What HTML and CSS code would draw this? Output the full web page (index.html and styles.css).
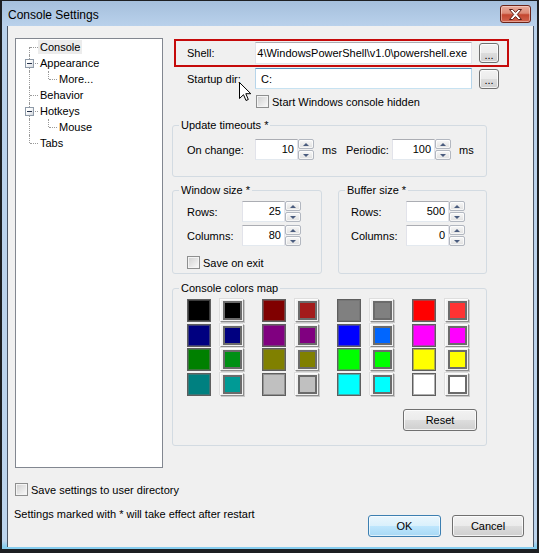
FILE: index.html
```html
<!DOCTYPE html>
<html>
<head>
<meta charset="utf-8">
<title>Console Settings</title>
<link rel="stylesheet" href="styles.css">
</head>
<body>
<div class="window">
  <div class="titlebar">
    <span class="title">Console Settings</span>
    <div class="close">
      <svg width="13" height="11" viewBox="0 0 13 11"><polygon points="0.5,0.5 3.7,0.5 6.5,3.4 9.3,0.5 12.5,0.5 8.3,5.5 12.5,10.5 9.3,10.5 6.5,7.6 3.7,10.5 0.5,10.5 4.7,5.5" fill="#fff" stroke="#5a1c14" stroke-width="1"/></svg>
    </div>
  </div>
  <div class="client">
    <div class="main">
      <div class="tree">
        <div class="trow"><span class="cell first"></span><span class="tl sel">Console</span></div>
        <div class="trow"><span class="cell mid"><span class="exp"></span></span><span class="tl">Appearance</span></div>
        <div class="trow"><span class="indent"></span><span class="cell last"></span><span class="tl">More...</span></div>
        <div class="trow"><span class="cell mid"></span><span class="tl">Behavior</span></div>
        <div class="trow"><span class="cell mid"><span class="exp"></span></span><span class="tl">Hotkeys</span></div>
        <div class="trow"><span class="indent"></span><span class="cell last"></span><span class="tl">Mouse</span></div>
        <div class="trow"><span class="cell last"></span><span class="tl">Tabs</span></div>
      </div>
      <div class="panel">
        <div class="prow shell">
          <span class="plbl">Shell:</span>
          <div class="edit path"><span>4\WindowsPowerShell\v1.0\powershell.exe</span></div>
          <div class="btn dots">...</div>
        </div>
        <div class="prow startup">
          <span class="plbl">Startup dir:</span>
          <div class="edit hover">C:</div>
          <div class="btn dots">...</div>
        </div>
        <div class="check hidden-row"><span class="box"></span><span>Start Windows console hidden</span></div>

        <fieldset class="group timeouts">
          <legend>Update timeouts *</legend>
          <div class="gbody frow">
            <span class="flbl w68">On change:</span>
            <div class="spin"><div class="val">10</div><div class="arr"><span class="up"></span><span class="dn"></span></div></div>
            <span class="ms">ms</span>
            <span class="flbl w46">Periodic:</span>
            <div class="spin"><div class="val">100</div><div class="arr"><span class="up"></span><span class="dn"></span></div></div>
            <span class="ms">ms</span>
          </div>
        </fieldset>

        <div class="sizes">
          <fieldset class="group size">
            <legend>Window size *</legend>
            <div class="gbody">
              <div class="frow"><span class="flbl w55">Rows:</span><div class="spin"><div class="val">25</div><div class="arr"><span class="up"></span><span class="dn"></span></div></div></div>
              <div class="frow next"><span class="flbl w55">Columns:</span><div class="spin"><div class="val">80</div><div class="arr"><span class="up"></span><span class="dn"></span></div></div></div>
              <div class="check exit-row"><span class="box"></span><span>Save on exit</span></div>
            </div>
          </fieldset>
          <fieldset class="group size">
            <legend>Buffer size *</legend>
            <div class="gbody buf">
              <div class="frow"><span class="flbl w55">Rows:</span><div class="spin"><div class="val">500</div><div class="arr"><span class="up"></span><span class="dn"></span></div></div></div>
              <div class="frow next"><span class="flbl w55">Columns:</span><div class="spin"><div class="val">0</div><div class="arr"><span class="up"></span><span class="dn"></span></div></div></div>
            </div>
          </fieldset>
        </div>

        <fieldset class="group colors">
          <legend>Console colors map</legend>
          <div class="gbody">
            <div class="swatches">
              <span class="sw" style="background:#000000"></span><span class="swb"><i style="background:#000000"></i></span>
              <span class="sw" style="background:#800000"></span><span class="swb"><i style="background:#a31b1b"></i></span>
              <span class="sw" style="background:#808080"></span><span class="swb"><i style="background:#808080"></i></span>
              <span class="sw" style="background:#ff0000"></span><span class="swb"><i style="background:#ff3333"></i></span>

              <span class="sw" style="background:#000080"></span><span class="swb"><i style="background:#000080"></i></span>
              <span class="sw" style="background:#800080"></span><span class="swb"><i style="background:#800080"></i></span>
              <span class="sw" style="background:#0000ff"></span><span class="swb"><i style="background:#0066ff"></i></span>
              <span class="sw" style="background:#ff00ff"></span><span class="swb"><i style="background:#ff00ff"></i></span>

              <span class="sw" style="background:#008000"></span><span class="swb"><i style="background:#009014"></i></span>
              <span class="sw" style="background:#808000"></span><span class="swb"><i style="background:#808000"></i></span>
              <span class="sw" style="background:#00ff00"></span><span class="swb"><i style="background:#00ff00"></i></span>
              <span class="sw" style="background:#ffff00"></span><span class="swb"><i style="background:#ffff00"></i></span>

              <span class="sw" style="background:#008080"></span><span class="swb"><i style="background:#009a95"></i></span>
              <span class="sw" style="background:#c0c0c0"></span><span class="swb"><i style="background:#c0c0c0"></i></span>
              <span class="sw" style="background:#00ffff"></span><span class="swb"><i style="background:#00ffff"></i></span>
              <span class="sw" style="background:#ffffff"></span><span class="swb"><i style="background:#ffffff"></i></span>
            </div>
            <div class="reset-row"><div class="btn reset">Reset</div></div>
          </div>
        </fieldset>
      </div>
    </div>
    <div class="footer">
      <div class="fleft">
        <div class="check"><span class="box"></span><span>Save settings to user directory</span></div>
        <div class="note">Settings marked with * will take effect after restart</div>
      </div>
      <div class="fbtns">
        <div class="btn default">OK</div>
        <div class="btn">Cancel</div>
      </div>
    </div>
  </div>
  <svg class="cursor" width="13" height="20" viewBox="0 0 13 20"><path d="M0.5 0.5 L0.5 16.5 L4.5 12.7 L7 18.5 L9.3 17.5 L6.8 11.7 L11.8 11.7 Z" fill="#fff" stroke="#000" stroke-width="1" stroke-linejoin="miter"/></svg>
</div>
</body>
</html>
```

FILE: styles.css
```css
html, body {
  margin: 0;
  padding: 0;
  background: #000;
}
body {
  font-family: "Liberation Sans", Arial, sans-serif;
  font-size: 11px;
  color: #000;
}
.window {
  position: relative;
  width: 539px;
  height: 553px;
  box-sizing: border-box;
  border-style: solid;
  border-color: #1d1f22;
  border-width: 1px 2px 4px 2px;
  padding: 0 3px 2px 5px;
  background: linear-gradient(to bottom, #a5bfdc 0px, #b9d1eb 25px, #bcd4ed 540px, #86cdef 546px);
  display: flex;
  flex-direction: column;
}
.titlebar {
  height: 25px;
  display: flex;
  align-items: flex-start;
  flex: none;
}
.title {
  font-size: 12px;
  line-height: 15px;
  margin: 7px 0 0 1px;
  color: #000;
}
.close {
  width: 31px;
  height: 18px;
  box-sizing: border-box;
  margin: 4px 3px 0 auto;
  border: 1px solid #6b2419;
  border-radius: 3px;
  background: linear-gradient(to bottom, #e9ab9b 0%, #dc8a76 45%, #c4462f 55%, #d0654f 100%);
  box-shadow: inset 0 0 0 1px rgba(255, 235, 230, 0.45);
  display: flex;
  align-items: center;
  justify-content: center;
}
.close svg { display: block; }

.client {
  flex: 1;
  background: #f0f0f0;
  border: 1px solid #4a5566;
  border-top: none;
  border-bottom: none;
  padding: 12px 9px 10px 7px;
  display: flex;
  flex-direction: column;
}
.main {
  display: flex;
  align-items: flex-start;
}

/* tree */
.tree {
  width: 148px;
  height: 430px;
  box-sizing: border-box;
  border: 1px solid #828790;
  background: #fff;
  padding-left: 5px;
  flex: none;
}
.trow {
  display: flex;
  height: 16px;
}
.cell, .indent {
  position: relative;
  flex: none;
}
.cell { width: 17px; }
.indent { width: 19px; }
.cell::before, .indent::before {
  content: "";
  position: absolute;
  left: 8px;
  border-left: 1px dotted #9a9a9a;
}
.indent::before, .cell.mid::before { top: 0; bottom: 0; }
.cell.first::before { top: 8px; bottom: 0; }
.cell.last::before { top: 0; height: 8px; }
.cell::after {
  content: "";
  position: absolute;
  left: 9px;
  top: 8px;
  width: 8px;
  border-top: 1px dotted #9a9a9a;
}
.exp {
  position: absolute;
  left: 4px;
  top: 4px;
  width: 9px;
  height: 9px;
  box-sizing: border-box;
  border: 1px solid #8e9aa8;
  background: linear-gradient(135deg, #ffffff 30%, #d4d8de);
  z-index: 1;
}
.exp::after {
  content: "";
  position: absolute;
  left: 1px;
  top: 3px;
  width: 5px;
  height: 1px;
  background: #25324a;
}
.tl {
  height: 14px;
  line-height: 14px;
  margin-top: 1px;
  padding: 0 2px;
  white-space: nowrap;
}
.tl.sel { background: #ececec; }

/* right panel */
.panel {
  margin-left: 9px;
  width: 336px;
  display: flex;
  flex-direction: column;
}
.prow {
  display: flex;
  align-items: center;
}
.plbl {
  width: 68px;
  flex: none;
}
.shell {
  margin: 1px 0 0 2px;
  width: 335px;
  height: 28px;
  box-sizing: border-box;
  border: 2px solid #c50a0a;
  padding: 0 8px 0 11px;
}
.startup {
  margin-top: 1px;
  height: 21px;
  padding-left: 15px;
}
.edit {
  width: 217px;
  height: 22px;
  box-sizing: border-box;
  border: 1px solid;
  border-color: #abadb3 #e2e3ea #e3e9ef #e2e3ea;
  background: #fff;
  display: flex;
  align-items: center;
  padding: 0 5px;
  white-space: nowrap;
  overflow: hidden;
  flex: none;
}
.startup .edit { height: 21px; }
.edit.path {
  justify-content: flex-end;
  padding: 0 4px 0 0;
}
.edit.path span { flex: none; }
.edit.hover {
  border-color: #5794bf #b7d5ea #c7e2f1 #b7d5ea;
}
.btn {
  box-sizing: border-box;
  border: 1px solid #707070;
  border-radius: 3px;
  background: linear-gradient(to bottom, #f2f2f2 0%, #ebebeb 50%, #dddddd 50%, #cfcfcf 100%);
  box-shadow: inset 0 0 0 1px rgba(255, 255, 255, 0.75);
  display: flex;
  align-items: center;
  justify-content: center;
  flex: none;
}
.dots {
  width: 20px;
  height: 20px;
  margin-left: 7px;
  font-size: 11px;
  line-height: 1;
  padding-top: 4px;
  letter-spacing: 0;
}
.check {
  display: flex;
  align-items: center;
  height: 13px;
  white-space: nowrap;
}
.box {
  width: 13px;
  height: 13px;
  box-sizing: border-box;
  border: 1px solid #8e8f8f;
  background: linear-gradient(135deg, #cfcfcf 0%, #f2f2f2 80%, #fdfdfd 100%);
  box-shadow: inset 0 0 0 1px #f4f4f4;
  margin-right: 3px;
  flex: none;
}
.hidden-row {
  margin-top: 6px;
  padding-left: 84px;
}

/* group boxes */
fieldset.group {
  margin: 0;
  min-width: 0;
  padding: 7px 9px 16px 6px;
  border: 1px solid #d3dbe2;
  border-radius: 3px;
}
legend {
  padding: 0 2px;
  line-height: 14px;
  height: 14px;
}
.gbody { margin-left: 8px; }
.gbody.buf { margin-left: 6px; }
.timeouts {
  margin-top: 10px !important;
  width: 315px;
  box-sizing: border-box;
}
.frow {
  display: flex;
  align-items: center;
  white-space: nowrap;
}
.flbl { flex: none; }
.w68 { width: 68px; }
.w46 { width: 46px; }
.w55 { width: 55px; }
.ms {
  width: 24px;
  margin-left: 8px;
  flex: none;
}
.frow .ms:last-child { width: auto; }
.spin {
  display: flex;
  height: 21px;
  flex: none;
}
.val {
  width: 43px;
  box-sizing: border-box;
  border: 1px solid;
  border-color: #abadb3 #e2e3ea #e3e9ef #e2e3ea;
  background: #fff;
  text-align: right;
  padding-right: 3px;
  line-height: 19px;
}
.arr {
  width: 16px;
  display: flex;
  flex-direction: column;
  gap: 1px;
}
.arr span {
  flex: 1;
  box-sizing: border-box;
  border: 1px solid #b2b7c0;
  border-radius: 2px;
  background: linear-gradient(to bottom, #f8f8f8, #e0e0e0);
  box-shadow: inset 0 0 0 1px rgba(255, 255, 255, 0.7);
  display: flex;
  align-items: center;
  justify-content: center;
}
.arr span::after {
  content: "";
  width: 0;
  height: 0;
  border-left: 3px solid transparent;
  border-right: 3px solid transparent;
}
.arr .up::after { border-bottom: 3px solid #4a5c7e; }
.arr .dn::after { border-top: 3px solid #4a5c7e; }

.sizes {
  margin-top: 6px;
  width: 315px;
  display: grid;
  grid-template-columns: 150px 149px;
  column-gap: 16px;
}
fieldset.size {
  padding-top: 4px;
  padding-bottom: 4px;
}
.frow.next { margin-top: 3px; }
.exit-row { margin-top: 10px; }

.colors {
  margin-top: 7px !important;
  width: 315px;
  box-sizing: border-box;
  padding-top: 4px !important;
  padding-bottom: 14px !important;
}
.swatches {
  display: grid;
  grid-template-columns: repeat(3, 33px 42px) 33px 24px;
  grid-auto-rows: 23px;
  row-gap: 1.5px;
}
.sw {
  display: block;
  width: 24px;
  height: 23px;
  box-sizing: border-box;
  border: 1px solid #5e5e5e;
  box-shadow: inset 0 0 0 1px rgba(110, 110, 110, 0.55);
}
.swb {
  display: block;
  width: 24px;
  height: 23px;
  box-sizing: border-box;
  border: 1px solid;
  border-color: #fcfcfc #8d8d8d #8d8d8d #fcfcfc;
  box-shadow: 1px 1px 0 #c8c8c8, -1px -1px 0 #dedede;
  background: #f0f0f0;
  padding: 1px 1px 1px 2px;
}
.swb i {
  display: block;
  width: 100%;
  height: 100%;
  box-sizing: border-box;
  border: 2px solid #6b6b6b;
}
.reset-row {
  display: flex;
  justify-content: flex-end;
  margin-top: 13.5px;
}
.reset {
  width: 74px;
  height: 22px;
}

/* footer */
.footer {
  display: flex;
  margin-top: 15px;
}
.fleft {
  display: flex;
  flex-direction: column;
}
.note {
  margin-top: 12px;
  margin-left: -1px;
  line-height: 13px;
}
.fbtns {
  margin-left: auto;
  margin-top: 32px;
  display: flex;
  gap: 11px;
}
.fbtns .btn {
  width: 72px;
  height: 22px;
}
.fbtns .btn.default {
  width: 73px;
  border-color: #3c7fb1;
  background: linear-gradient(to bottom, #eaf6fd 0%, #d9f0fc 50%, #bee6fd 50%, #a7d9f5 100%);
  box-shadow: inset 0 0 0 1px rgba(255, 255, 255, 0.6);
}

.cursor {
  position: absolute;
  left: 237px;
  top: 81px;
  overflow: visible;
}
```
